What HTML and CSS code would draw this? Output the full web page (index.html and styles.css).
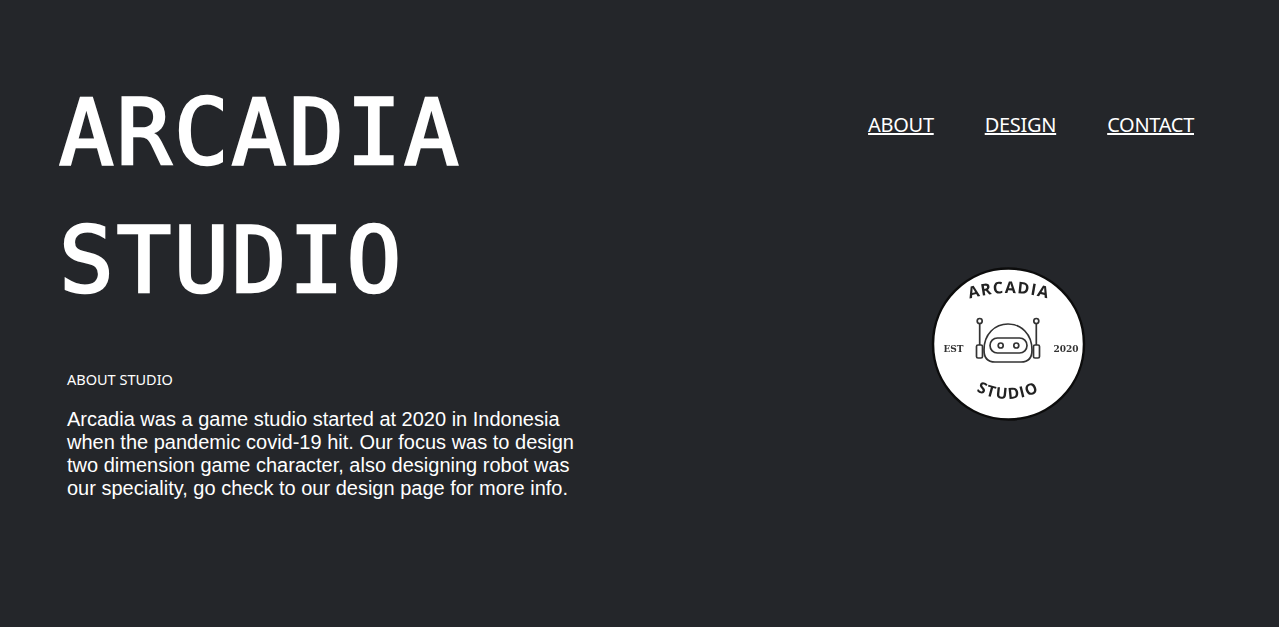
FILE: index.html
```html
<!DOCTYPE html>
<html lang="en">
<head>
<meta charset="utf-8">
<title>Arcadia Studio</title>
<link rel="stylesheet" href="styles.css">
</head>
<body>
<main class="page">
  <section class="intro">
    <h1 class="title">ARCADIA<br>STUDIO</h1>
    <div class="about">
      <h2 class="about-label">ABOUT STUDIO</h2>
      <p class="about-text">Arcadia was a game studio started at 2020 in Indonesia<br>when the pandemic covid-19 hit. Our focus was to design<br>two dimension game character, also designing robot was<br>our speciality, go check to our design page for more info.</p>
    </div>
  </section>
  <section class="side">
    <nav class="nav">
      <a href="#about">ABOUT</a>
      <a href="#design">DESIGN</a>
      <a href="#contact">CONTACT</a>
    </nav>
    <svg class="logo" width="156" height="156" viewBox="0 0 156 156" role="img" aria-label="Arcadia Studio logo">
      <defs>
        <path id="arc-top" d="M23 38 Q78 16 133 38"/>
        <path id="arc-bottom" d="M33 118 Q77 148 121 118"/>
      </defs>
      <circle cx="77.500" cy="78" r="75.500" fill="#fff" stroke="#0c0c0c" stroke-width="2.500"/>
      <text class="logo-word"><textPath href="#arc-top" startOffset="50%" text-anchor="middle">ARCADIA</textPath></text>
      <text class="logo-word logo-word-small"><textPath href="#arc-bottom" startOffset="50%" text-anchor="middle">STUDIO</textPath></text>
      <text class="logo-small" x="22.500" y="86" text-anchor="middle">EST</text>
      <text class="logo-small" x="135" y="86" text-anchor="middle">2020</text>
      <g fill="none" stroke="#333" stroke-width="1.700">
        <circle cx="48.700" cy="55" r="2.500"/>
        <circle cx="105.300" cy="55" r="2.500"/>
        <path d="M48.700 58V79M105.300 58V79"/>
        <rect x="45.500" y="79" width="6" height="13" rx="1.500"/>
        <rect x="102.500" y="79" width="6" height="13" rx="1.500"/>
        <path d="M53 84C53 68 64 58 77 58C90 58 101 68 101 84C101 92 97 96 90 96H64C57 96 53 92 53 84Z"/>
        <rect x="59" y="72" width="37" height="15" rx="7.500"/>
        <circle cx="69.700" cy="79.500" r="2.500"/>
        <circle cx="85.300" cy="79.500" r="2.500"/>
      </g>
    </svg>
  </section>
</main>
</body>
</html>
```
FILE: styles.css
```css
html, body {
  margin: 0;
  height: 100%;
  background: #24262a;
  color: #fff;
}

.page {
  display: flex;
  justify-content: space-between;
  height: 627px;
  box-sizing: border-box;
  padding: 69px 85px 0 59px;
  overflow: hidden;
}

.intro {
  display: flex;
  flex-direction: column;
}

.title {
  margin: 0;
  font-family: "DejaVu Sans Mono", monospace;
  font-size: 91px;
  font-weight: 400;
  line-height: 128px;
  letter-spacing: 2.700px;
  -webkit-text-stroke: 2.600px #fff;
}

.about {
  margin: 44px 0 0 8px;
}

.about-label {
  margin: 0;
  font-family: "Noto Sans", sans-serif;
  font-size: 14.500px;
  font-weight: 400;
  line-height: 20px;
}

.about-text {
  margin: 19px 0 0;
  font-family: "Liberation Sans", Arial, sans-serif;
  font-size: 20px;
  line-height: 23px;
}

.side {
  display: flex;
  flex-direction: column;
  align-items: flex-end;
  padding-top: 42px;
}

.nav {
  display: flex;
  gap: 51px;
  font-family: "Noto Sans", sans-serif;
  font-size: 20px;
  line-height: 28px;
}

.nav a {
  color: #fff;
  letter-spacing: -0.300px;
}

.logo {
  display: block;
  margin: 127px 107px 0 0;
  filter: blur(0.600px);
}

.logo-word {
  font-family: "Open Sans", sans-serif;
  font-size: 16px;
  font-weight: 700;
  letter-spacing: 1.300px;
  fill: #222;
}

.logo-word-small {
  font-size: 15.500px;
}

.logo-small {
  font-family: "DejaVu Serif", serif;
  font-size: 9px;
  font-weight: 700;
  fill: #333;
}
```
